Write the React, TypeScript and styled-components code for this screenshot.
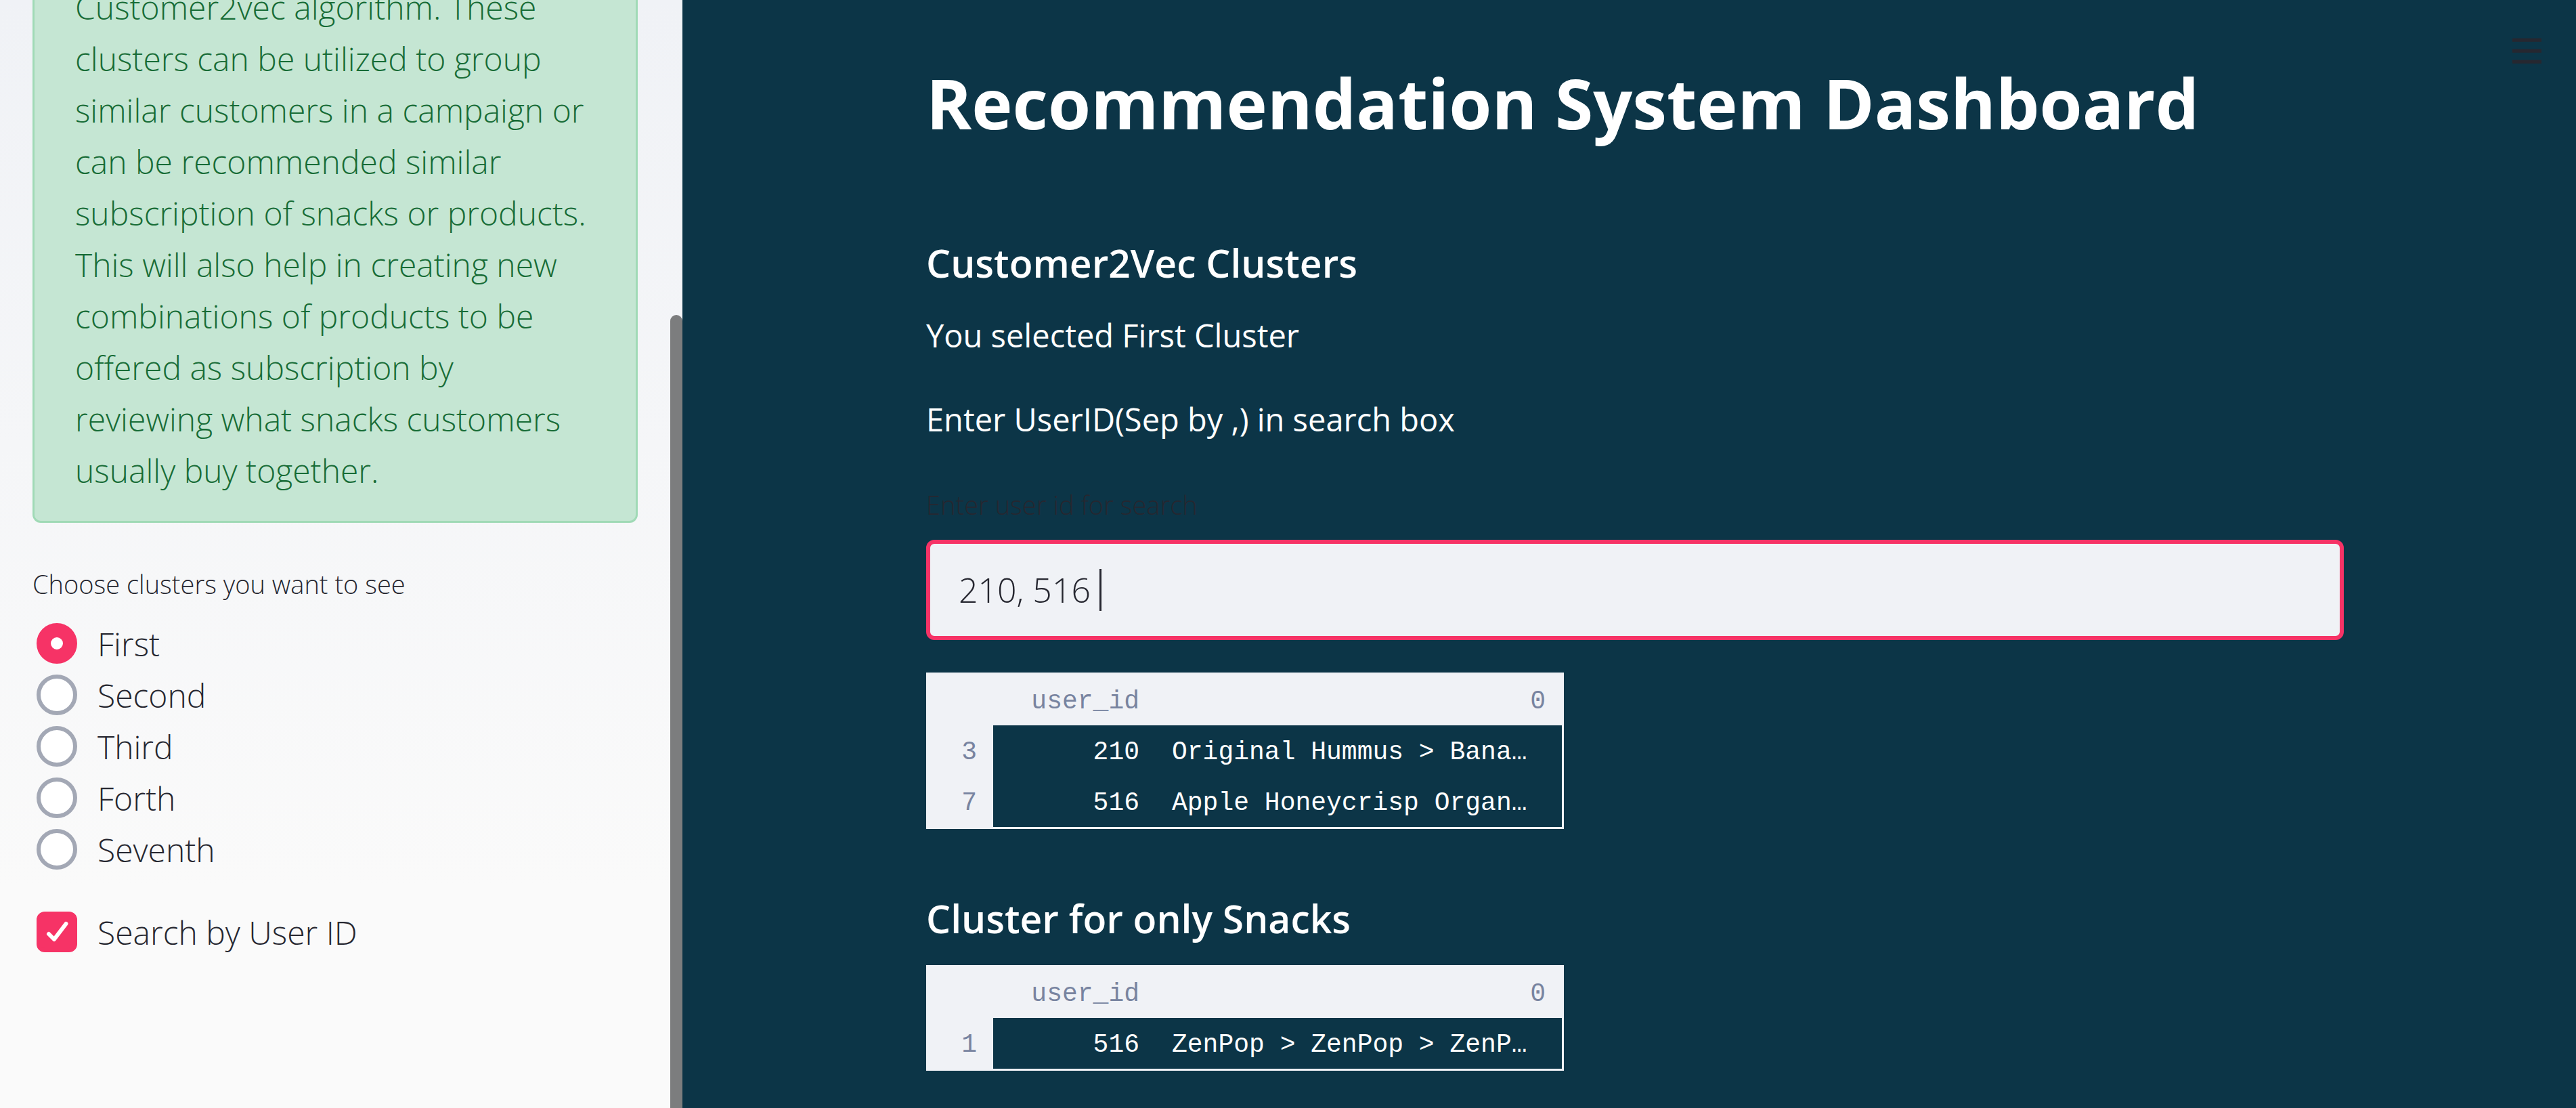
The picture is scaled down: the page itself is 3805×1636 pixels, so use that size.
import React, { useState } from "react";
import styled, { createGlobalStyle } from "styled-components";

const sans = `"Open Sans", "Noto Sans", sans-serif`;
const mono = `"Liberation Mono", "DejaVu Sans Mono", monospace`;

const color = {
  page: "#0c3547",
  ink: "#262730",
  accent: "#f63366",
  surface: "#f0f2f6",
  muted: "#7884a0",
  ring: "#a3a8b5",
};

const GlobalStyle = createGlobalStyle`
  *, *::before, *::after { box-sizing: border-box; }
  body { margin: 0; background: ${color.page}; font-family: ${sans}; }
`;

const Layout = styled.div`
  display: flex;
  height: 100vh;
  overflow: hidden;
`;

const Sidebar = styled.aside`
  position: relative;
  flex: none;
  width: 1008px;
  padding: 0 66px 222px 48px;
  display: flex;
  flex-direction: column;
  justify-content: flex-end;
  overflow: hidden;
  background: linear-gradient(#f0f2f6, #fafafa 80%);
  color: ${color.ink};
  > * { flex: none; }
`;

const ScrollThumb = styled.div`
  position: absolute;
  top: 465px;
  right: 0;
  bottom: 0;
  width: 18px;
  border-radius: 9px 9px 0 0;
  background: #7c7d7e;
`;

const Alert = styled.div`
  padding: 36px 64px 36px 60px;
  border: 3px solid #a0dab6;
  border-radius: 12px;
  background: #c5e6d3;
  color: #176c36;
  font-size: 48px;
  font-weight: 300;
  line-height: 76px;
`;

const ClusterGroup = styled.fieldset`
  margin: 62px 0 46px;
  padding: 0;
  border: 0;
`;

const Legend = styled.legend`
  margin-bottom: 22px;
  padding: 0;
  font-size: 38px;
  font-weight: 300;
  line-height: 56px;
`;

const Option = styled.label`
  display: flex;
  align-items: center;
  gap: 30px;
  height: 76px;
  padding-left: 6px;
  font-size: 48px;
  font-weight: 300;
`;

const Radio = styled.input`
  appearance: none;
  flex: none;
  width: 60px;
  height: 60px;
  margin: 0;
  border: 6px solid ${color.ring};
  border-radius: 50%;
  background: #fff;
  &:checked {
    border: 21px solid ${color.accent};
  }
`;

const TickBox = styled.span`
  display: grid;
  flex: none;
  width: 60px;
  height: 60px;
  > * { grid-area: 1 / 1; }
  svg { pointer-events: none; }
`;

const Checkbox = styled.input`
  appearance: none;
  width: 60px;
  height: 60px;
  margin: 0;
  border: 6px solid ${color.ring};
  border-radius: 12px;
  background: #fff;
  &:checked {
    border-color: ${color.accent};
    background: ${color.accent};
  }
`;

const Main = styled.main`
  position: relative;
  flex: 1;
  display: flex;
  justify-content: center;
  padding: 86px 0 0 17px;
  color: #fff;
`;

const Content = styled.div`
  width: 100%;
  max-width: 2094px;
`;

const MenuButton = styled.button`
  position: absolute;
  top: 56px;
  right: 51px;
  display: flex;
  padding: 0;
  border: 0;
  background: none;
  color: ${color.ink};
`;

const Title = styled.h1`
  margin: 0 0 132px;
  font-size: 102px;
  font-weight: 700;
  line-height: 132px;
`;

const Heading = styled.h3`
  margin: 0 0 31px;
  font-size: 57px;
  font-weight: 600;
  line-height: 76px;
`;

const Text = styled.p`
  margin: 0 0 48px;
  font-size: 47px;
  line-height: 76px;
`;

const FieldLabel = styled.label`
  display: block;
  margin: 60px 0 24px;
  color: ${color.ink};
  font-size: 38px;
  font-weight: 300;
  line-height: 56px;
`;

const Field = styled.div`
  display: flex;
  align-items: center;
  height: 148px;
  margin-bottom: 48px;
  padding: 0 42px;
  border: 6px solid ${color.accent};
  border-radius: 12px;
  background: ${color.surface};
`;

const FieldInput = styled.input`
  field-sizing: content;
  padding: 0;
  border: 0;
  outline: 0;
  background: none;
  color: ${color.ink};
  font-family: ${sans};
  font-size: 50px;
  font-weight: 300;
  line-height: 76px;
`;

const Caret = styled.span`
  width: 3px;
  height: 62px;
  background: ${color.ink};
`;

const Frame = styled.table`
  width: 942px;
  margin-bottom: 94px;
  border: 3px solid ${color.surface};
  border-spacing: 0;
  table-layout: fixed;
  font-family: ${mono};
  font-size: 38px;
  line-height: 66px;
`;

const Col = styled.col<{ $w: number }>`
  width: ${(p) => p.$w}px;
`;

const HeadCell = styled.th`
  height: 75px;
  padding: 7px 24px 2px;
  background: ${color.surface};
  color: ${color.muted};
  font-weight: 400;
  text-align: right;
`;

const Cell = styled.td<{ $left?: boolean }>`
  height: 75px;
  padding: 7px 24px 2px;
  text-align: ${(p) => (p.$left ? "left" : "right")};
  white-space: nowrap;
`;

type Row = { index: number; userId: number; items: string };

function DataFrame({ rows }: { rows: Row[] }) {
  return (
    <Frame>
      <colgroup>
        <Col $w={96} />
        <Col $w={240} />
        <Col $w={600} />
      </colgroup>
      <thead>
        <tr>
          <HeadCell />
          <HeadCell scope="col">user_id</HeadCell>
          <HeadCell scope="col">0</HeadCell>
        </tr>
      </thead>
      <tbody>
        {rows.map((r) => (
          <tr key={r.index}>
            <HeadCell scope="row">{r.index}</HeadCell>
            <Cell>{r.userId}</Cell>
            <Cell $left>{r.items}</Cell>
          </tr>
        ))}
      </tbody>
    </Frame>
  );
}

const clusters = ["First", "Second", "Third", "Forth", "Seventh"];

const searchRows: Row[] = [
  { index: 3, userId: 210, items: "Original Hummus > Bana…" },
  { index: 7, userId: 516, items: "Apple Honeycrisp Organ…" },
];

const snackRows: Row[] = [
  { index: 1, userId: 516, items: "ZenPop > ZenPop > ZenP…" },
];

export default function App() {
  const [cluster, setCluster] = useState("First");
  const [search, setSearch] = useState(true);
  const [query, setQuery] = useState("210, 516 ");

  return (
    <>
      <GlobalStyle />
      <Layout>
        <Sidebar>
          <Alert>
            Customer2vec algorithm. These clusters can be utilized to group
            similar customers in a campaign or can be recommended similar
            subscription of snacks or products. This will also help in creating
            new combinations of products to be offered as subscription by
            reviewing what snacks customers usually buy together.
          </Alert>
          <ClusterGroup>
            <Legend>Choose clusters you want to see</Legend>
            {clusters.map((name) => (
              <Option key={name}>
                <Radio
                  type="radio"
                  name="cluster"
                  checked={cluster === name}
                  onChange={() => setCluster(name)}
                />
                {name}
              </Option>
            ))}
          </ClusterGroup>
          <Option>
            <TickBox>
              <Checkbox
                type="checkbox"
                checked={search}
                onChange={(e) => setSearch(e.target.checked)}
              />
              {search && (
                <svg width="60" height="60" viewBox="0 0 60 60" fill="none" aria-hidden="true">
                  <path
                    d="M18 33L26 41L43.5 18"
                    stroke="#fff"
                    strokeWidth="6"
                    strokeLinecap="round"
                    strokeLinejoin="round"
                  />
                </svg>
              )}
            </TickBox>
            Search by User ID
          </Option>
          <ScrollThumb />
        </Sidebar>
        <Main>
          <MenuButton type="button" aria-label="Menu">
            <svg width="43" height="38" viewBox="0 0 43 38" fill="currentColor" aria-hidden="true">
              <path d="M0 .5h43v5.3H0zM0 16.5h43v5.3H0zM0 32.5h43v5.3H0z" />
            </svg>
          </MenuButton>
          <Content>
            <Title>Recommendation System Dashboard</Title>
            <Heading>Customer2Vec Clusters</Heading>
            <Text>You selected {cluster} Cluster</Text>
            <Text>Enter UserID(Sep by ,) in search box</Text>
            <FieldLabel htmlFor="user-search">Enter user id for search</FieldLabel>
            <Field>
              <FieldInput
                id="user-search"
                type="text"
                value={query}
                onChange={(e) => setQuery(e.target.value)}
              />
              <Caret />
            </Field>
            <DataFrame rows={searchRows} />
            <Heading>Cluster for only Snacks</Heading>
            <DataFrame rows={snackRows} />
          </Content>
        </Main>
      </Layout>
    </>
  );
}
